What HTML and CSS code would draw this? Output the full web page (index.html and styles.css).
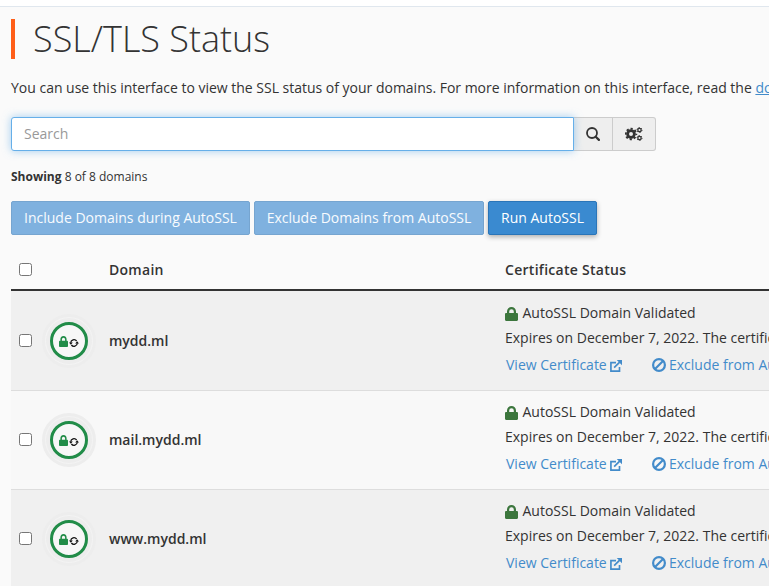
FILE: index.html
```html
<!DOCTYPE html>
<html lang="en">
<head>
<meta charset="utf-8">
<title>SSL/TLS Status</title>
<link rel="stylesheet" href="styles.css">
</head>
<body>
<svg class="defs" width="0" height="0" aria-hidden="true">
  <symbol id="lock" viewBox="0 0 13 14" preserveAspectRatio="none"><path fill="currentColor" fill-rule="evenodd" d="M2 6V4.500a4.500 4.500 0 0 1 9 0V6h.8c.7 0 1.200.5 1.200 1.200v5.600c0 .7-.5 1.200-1.200 1.200H1.200C.5 14 0 13.500 0 12.800V7.200C0 6.500.5 6 1.200 6zm2.200 0h4.600V4.500a2.300 2.300 0 0 0-4.600 0z"/></symbol>
  <symbol id="sync" viewBox="0 0 10 8"><path fill="none" stroke="currentColor" stroke-width="1.300" d="M1.700 3.800A3.300 3.300 0 0 1 7.600 2M8.300 4.200A3.300 3.300 0 0 1 2.400 6"/><path fill="currentColor" d="M0 3.400h3.800L1.900 5.800zM6.200 4.600H10L8.100 2.200z"/></symbol>
  <symbol id="external" viewBox="0 0 13 13"><path fill="none" stroke="currentColor" stroke-width="1.800" d="M6.500 2.800H1v9.200h9.300V7.500M4.500 8.300l6-6"/><path fill="currentColor" d="M7.300 0H13v5.700z"/></symbol>
  <symbol id="ban" viewBox="0 0 14 14"><circle cx="7" cy="7" r="5.900" fill="none" stroke="currentColor" stroke-width="2.200"/><path stroke="currentColor" stroke-width="2.200" d="M3 11l8-8"/></symbol>
  <symbol id="search" viewBox="0 0 14 14"><circle cx="6" cy="6" r="5" fill="none" stroke="currentColor" stroke-width="1.800"/><path stroke="currentColor" stroke-width="2.200" stroke-linecap="round" d="M9.700 9.700l3.200 3.200"/></symbol>
  <symbol id="cogs" viewBox="0 0 18 14"><g fill="none" stroke="currentColor"><circle cx="6" cy="7" r="3.400" stroke-width="2.800"/><circle cx="6" cy="7" r="5.300" stroke-width="1.900" stroke-dasharray="2.200 1.962" stroke-dashoffset="1.100"/><circle cx="14.500" cy="3" r="1.700" stroke-width="1.300"/><circle cx="14.500" cy="3" r="2.500" stroke-width="1" stroke-dasharray="1.300 1.318"/><circle cx="14.500" cy="11" r="1.700" stroke-width="1.300"/><circle cx="14.500" cy="11" r="2.500" stroke-width="1" stroke-dasharray="1.300 1.318"/></g></symbol>
</svg>
<div class="topbar"></div>
<main>
  <h1>SSL/TLS Status</h1>
  <p class="intro">You can use this interface to view the SSL status of your domains. For more information on this interface, read the <a href="#">documentation</a>.</p>
  <div class="search">
    <input type="text" placeholder="Search" aria-label="Search">
    <button class="find" aria-label="Find"><svg width="14" height="14"><use href="#search"/></svg></button>
    <button class="settings" aria-label="Settings"><svg width="18" height="14"><use href="#cogs"/></svg></button>
  </div>
  <p class="count"><strong>Showing</strong> 8 of 8 domains</p>
  <div class="actions">
    <button class="include" disabled>Include Domains during AutoSSL</button>
    <button class="exclude" disabled>Exclude Domains from AutoSSL</button>
    <button class="run">Run AutoSSL</button>
  </div>
  <div class="row head"><i class="check"></i><b class="col-domain">Domain</b><b>Certificate Status</b></div>
  <div class="row">
    <i class="check"></i>
    <div class="badge"><span><svg class="mini-lock"><use href="#lock"/></svg><svg class="mini-sync"><use href="#sync"/></svg></span></div>
    <div class="name">mydd.ml</div>
    <div class="status">
      <div class="valid"><svg><use href="#lock"/></svg>AutoSSL Domain Validated</div>
      <div class="expires">Expires on December 7, 2022. The certificate will renew via AutoSSL.</div>
      <div class="links"><a class="view" href="#">View Certificate<svg><use href="#external"/></svg></a><a class="omit" href="#"><svg><use href="#ban"/></svg>Exclude from AutoSSL</a></div>
    </div>
  </div>
  <div class="row even">
    <i class="check"></i>
    <div class="badge"><span><svg class="mini-lock"><use href="#lock"/></svg><svg class="mini-sync"><use href="#sync"/></svg></span></div>
    <div class="name">mail.mydd.ml</div>
    <div class="status">
      <div class="valid"><svg><use href="#lock"/></svg>AutoSSL Domain Validated</div>
      <div class="expires">Expires on December 7, 2022. The certificate will renew via AutoSSL.</div>
      <div class="links"><a class="view" href="#">View Certificate<svg><use href="#external"/></svg></a><a class="omit" href="#"><svg><use href="#ban"/></svg>Exclude from AutoSSL</a></div>
    </div>
  </div>
  <div class="row">
    <i class="check"></i>
    <div class="badge"><span><svg class="mini-lock"><use href="#lock"/></svg><svg class="mini-sync"><use href="#sync"/></svg></span></div>
    <div class="name">www.mydd.ml</div>
    <div class="status">
      <div class="valid"><svg><use href="#lock"/></svg>AutoSSL Domain Validated</div>
      <div class="expires">Expires on December 7, 2022. The certificate will renew via AutoSSL.</div>
      <div class="links"><a class="view" href="#">View Certificate<svg><use href="#external"/></svg></a><a class="omit" href="#"><svg><use href="#ban"/></svg>Exclude from AutoSSL</a></div>
    </div>
  </div>
</main>
</body>
</html>
```
FILE: styles.css
```css
* { box-sizing: border-box; }
body {
  margin: 0;
  height: 586px;
  overflow: hidden;
  background: #fafafa;
  color: #333;
  font: 14px/20px "Open Sans", sans-serif;
}
.defs { display: none; }
svg { display: block; flex: none; }
.topbar { height: 7px; background: #fff; border-bottom: 1px solid #e0e7ee; }
main { height: 579px; padding: 12px 0 0 11px; overflow: hidden; white-space: nowrap; }
h1 {
  margin: 0;
  height: 40px;
  padding-left: 18px;
  border-left: 4px solid #ff5e18;
  font-size: 36px;
  line-height: 40px;
  font-weight: 300;
}
.intro { margin: 19px 0 0; letter-spacing: -.01px; }
a { color: #428bca; }
.search { display: flex; margin-top: 19px; height: 34px; }
input {
  width: 563px;
  padding: 0 12px;
  border: 1px solid #66afe9;
  border-radius: 3px 0 0 3px;
  background: #fff;
  box-shadow: 0 0 8px rgba(102, 175, 233, .6);
  font: inherit;
  outline: none;
  z-index: 1;
}
input::placeholder { color: #999; opacity: 1; }
button { font: inherit; margin: 0; padding: 0; }
.search button {
  display: flex;
  align-items: center;
  justify-content: center;
  border: 1px solid #ccc;
  border-left: 0;
  background: #eee;
  color: #333;
}
.find { width: 39px; }
.settings { width: 43px; border-radius: 0 3px 3px 0; }
.count { margin: 16px 0 0; font-size: 12px; }
.actions { display: flex; gap: 4px; margin-top: 14px; }
.actions button {
  height: 34px;
  border: 1px solid #2a75b8;
  border-radius: 2px;
  background: #3a8ad0;
  color: #fff;
}
.actions button:disabled { border-color: #76a5d0; background: #7fb1df; color: #f8fbfe; }
.include { width: 239px; }
.exclude { width: 230px; }
.run { width: 109px; box-shadow: 0 2px 5px rgba(0, 0, 0, .3); }
.row {
  display: grid;
  grid-template-columns: 30px 68px 396px 1fr;
  height: 99px;
  align-items: center;
  border-bottom: 1px solid #ddd;
  background: #f0f0f0;
}
.even { background: #f8f8f8; }
.head { height: 56px; padding-top: 15px; border-bottom: 2px solid #333; background: transparent; }
.head + .row { height: 100px; padding-top: 1px; }
.head b { font-weight: 600; letter-spacing: .28px; }
.col-domain { grid-column: 3; }
.check {
  width: 13px;
  height: 13px;
  margin: 0 0 1px 8px;
  border: 1px solid #767676;
  border-radius: 2.5px;
  background: #fff;
}
.badge {
  display: flex;
  align-items: center;
  justify-content: center;
  width: 54px;
  height: 54px;
  margin-left: 1px;
  border: 3px solid #ededed;
  border-radius: 50%;
  background: #f3f3f3;
}
.badge span {
  display: flex;
  align-items: center;
  justify-content: center;
  width: 38px;
  height: 38px;
  border: 3px solid #218c48;
  border-radius: 50%;
  background: #f7f7f7;
  box-shadow: 0 0 0 4px #ededed;
}
.mini-lock { width: 9px; height: 11px; }
.mini-lock { margin-top: 1px; color: #218c48; }
.mini-sync { width: 10px; height: 8px; margin: 4px 0 0 1px; color: #111; }
.name { font-weight: 600; }
.status { align-self: start; width: 600px; padding-top: 11px; }
.valid { display: flex; align-items: center; gap: 4.5px; }
.valid svg { width: 13px; height: 14px; margin-top: 2px; color: #3c763d; }
.expires { margin-top: 5px; }
.links { display: flex; margin-top: 7px; padding-left: 1px; }
.links a { display: flex; align-items: center; text-decoration: none; }
.view { width: 146px; gap: 3px; }
.view svg { width: 12px; height: 12px; margin-top: 1px; }
.omit { gap: 3px; }
.omit svg { width: 14px; height: 14px; margin-top: -1px; }
```
